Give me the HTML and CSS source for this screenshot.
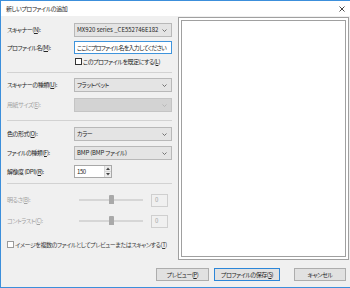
FILE: index.html
```html
<!DOCTYPE html>
<html lang="ja">
<head>
<meta charset="utf-8">
<link rel="stylesheet" href="styles.css">
</head>
<body>
<div class="win">
  <div class="titlebar">
    <span class="title">新しいプロファイルの追加</span>
    <svg class="close" width="6" height="6" viewBox="0 0 6 6"><path d="M0.5 0.5 L5.5 5.5 M5.5 0.5 L0.5 5.5" stroke="#333" stroke-width="0.9" fill="none"/></svg>
  </div>
  <div class="main">
    <div class="form">
      <div class="row">
        <span class="label">スキャナー(<u>N</u>):</span>
        <div class="combo"><span class="val latin">MX920 series _CE552746E182</span><svg class="chev" width="5" height="3" viewBox="0 0 5 3"><path d="M0.5 0.5 L2.5 2.5 L4.5 0.5" stroke="#555" stroke-width="0.8" fill="none"/></svg></div>
      </div>
      <div class="row mt4 h13">
        <span class="label">プロファイル名(<u>M</u>):</span>
        <div class="input">ここにプロファイル名を入力してください</div>
      </div>
      <div class="row mt3 h9">
        <span class="label"></span>
        <span class="check check-indent"></span>
        <span class="checktext">このプロファイルを既定にする(<u>L</u>)</span>
      </div>
      <div class="sep mt6"></div>
      <div class="row mt5">
        <span class="label">スキャナーの種類(<u>U</u>):</span>
        <div class="combo"><span class="val">フラットベット</span><svg class="chev" width="5" height="3" viewBox="0 0 5 3"><path d="M0.5 0.5 L2.5 2.5 L4.5 0.5" stroke="#555" stroke-width="0.8" fill="none"/></svg></div>
      </div>
      <div class="row mt6">
        <span class="label disabled">用紙サイズ(<u>E</u>):</span>
        <div class="combo combo-disabled"><span class="val"></span><svg class="chev" width="5" height="3" viewBox="0 0 5 3"><path d="M0.5 0.5 L2.5 2.5 L4.5 0.5" stroke="#b0b0b0" stroke-width="0.8" fill="none"/></svg></div>
      </div>
      <div class="sep mt8"></div>
      <div class="row mt6">
        <span class="label">色の形式(<u>O</u>):</span>
        <div class="combo"><span class="val">カラー</span><svg class="chev" width="5" height="3" viewBox="0 0 5 3"><path d="M0.5 0.5 L2.5 2.5 L4.5 0.5" stroke="#555" stroke-width="0.8" fill="none"/></svg></div>
      </div>
      <div class="row mt5">
        <span class="label">ファイルの種類(<u>F</u>):</span>
        <div class="combo"><span class="val mixed">BMP (BMP ファイル)</span><svg class="chev" width="5" height="3" viewBox="0 0 5 3"><path d="M0.5 0.5 L2.5 2.5 L4.5 0.5" stroke="#555" stroke-width="0.8" fill="none"/></svg></div>
      </div>
      <div class="row mt5 h13">
        <span class="label">解像度 (DPI)(<u>R</u>):</span>
        <div class="spin">
          <span class="spin-val">150</span>
          <span class="spin-btns">
            <span class="spin-btn"><svg width="4" height="3" viewBox="0 0 4 3"><path d="M0 3 L2 0.5 L4 3 Z" fill="#444"/></svg></span>
            <span class="spin-btn"><svg width="4" height="3" viewBox="0 0 4 3"><path d="M0 0 L2 2.5 L4 0 Z" fill="#444"/></svg></span>
          </span>
        </div>
      </div>
      <div class="sep mt5"></div>
      <div class="row mt9">
        <span class="label disabled">明るさ(<u>B</u>):</span>
        <div class="slider"><div class="track"></div><div class="thumb"></div></div>
        <div class="valbox">0</div>
      </div>
      <div class="row mt7">
        <span class="label disabled">コントラスト(<u>C</u>):</span>
        <div class="slider"><div class="track"></div><div class="thumb"></div></div>
        <div class="valbox">0</div>
      </div>
      <div class="row mt12 h9">
        <span class="check check-light"></span>
        <span class="checktext checktext-wide">イメージを複数のファイルとしてプレビューまたはスキャンする(<u>T</u>)</span>
      </div>
    </div>
    <div class="preview"><div class="preview-inner"></div></div>
  </div>
  <div class="buttons">
    <div class="btn btn-preview">プレビュー(<u>P</u>)</div>
    <div class="btn btn-save">プロファイルの保存(<u>S</u>)</div>
    <div class="btn btn-cancel">キャンセル</div>
  </div>
</div>
</body>
</html>
```

FILE: styles.css
```css
* { box-sizing: border-box; }
html, body { margin: 0; padding: 0; }
body {
  width: 350px;
  height: 288px;
  overflow: hidden;
  background: #f0f0f0;
  font-family: "Noto Sans CJK JP", "Noto Sans", sans-serif;
  font-size: 6px;
  letter-spacing: -0.45px;
  font-feature-settings: "palt";
  color: #262626;
  line-height: 1;
}
u { text-decoration: underline; text-underline-offset: 1px; text-decoration-thickness: 0.5px; }
.latin { font-size: 6px; letter-spacing: 0; }
.mixed { letter-spacing: -0.2px; }
.win {
  width: 350px;
  height: 288px;
  border: 1px solid #3c8fdb;
  border-right: none;
  background: #f0f0f0;
  display: flex;
  flex-direction: column;
}
.titlebar {
  height: 15px;
  flex: none;
  background: #fff;
  display: flex;
  align-items: center;
  justify-content: space-between;
  padding: 0 5px 0 5px;
}
.close { display: block; margin-top: 1px; }
.main { display: flex; align-items: flex-start; height: 244px; flex: none; }
.form { width: 166px; margin-left: 6px; padding-top: 7px; }
.row { display: flex; align-items: center; height: 14px; }
.h13 { height: 13px; }
.h9 { height: 9px; }
.mt3 { margin-top: 3px; }
.mt4 { margin-top: 4px; }
.mt5 { margin-top: 5px; }
.mt6 { margin-top: 6px; }
.mt7 { margin-top: 7px; }
.mt8 { margin-top: 8px; }
.mt9 { margin-top: 9px; }
.mt12 { margin-top: 12px; }
.label { width: 67px; flex: none; white-space: nowrap; }
.disabled { color: #a3a3a3; }
.combo {
  width: 98px;
  height: 100%;
  background: #e4e4e4;
  border: 1px solid #b8b8b8;
  display: flex;
  align-items: center;
  justify-content: space-between;
  padding: 0 4px 0 2px;
  white-space: nowrap;
}
.combo-disabled { background: #d3d3d3; border-color: #c4c4c4; }
.chev { display: block; flex: none; }
.input {
  width: 98px;
  height: 100%;
  background: #fff;
  border: 1px solid #3f94dc;
  display: flex;
  align-items: center;
  padding-left: 2px;
  white-space: nowrap;
  overflow: hidden;
  letter-spacing: -0.75px;
}
.check {
  width: 7px;
  height: 7px;
  flex: none;
  background: #fff;
  border: 1px solid #333;
}
.check-indent { margin-left: 1px; }
.check-light { border-color: #9a9a9a; }
.checktext { margin-left: 1px; white-space: nowrap; }
.checktext-wide { color: #3a3a3a; }
.sep { height: 1px; background: #d2d2d2; width: 165px; }
.spin {
  width: 38px;
  height: 100%;
  display: flex;
  background: #fff;
  border: 1px solid #a8a8a8;
}
.spin-val { flex: 1; display: flex; align-items: center; padding-left: 2px; }
.spin-btns { width: 7px; display: flex; flex-direction: column; border-left: 1px solid #d6d6d6; }
.spin-btn { flex: 1; display: flex; align-items: center; justify-content: center; background: #ececec; }
.spin-btn + .spin-btn { border-top: 1px solid #d6d6d6; }
.spin-btn svg { display: block; }
.slider { width: 64px; height: 100%; margin-left: 5px; position: relative; display: flex; align-items: center; }
.track { width: 100%; height: 2px; background: #d6d6d6; }
.thumb { position: absolute; left: 30px; top: 2px; width: 5px; height: 9px; background: #a9a9a9; border-radius: 1px 1px 0 0; }
.valbox {
  width: 17px;
  height: 13px;
  margin-left: 8px;
  border: 1px solid #cfcfcf;
  background: #f0f0f0;
  color: #a3a3a3;
  display: flex;
  align-items: center;
  padding-left: 3px;
}
.preview {
  width: 171px;
  height: 243px;
  margin-left: 5px;
  margin-top: 1px;
  border: 1px solid #a0a0a0;
  background: #fff;
  padding: 2px;
}
.preview-inner { width: 100%; height: 100%; border: 1px solid #a0a0a0; background: #fff; }
.buttons {
  display: flex;
  justify-content: flex-end;
  margin-top: 8px;
  padding-right: 4px;
}
.btn {
  height: 13px;
  background: #e1e1e1;
  border: 1px solid #adadad;
  display: flex;
  align-items: center;
  justify-content: center;
  white-space: nowrap;
}
.btn-preview { width: 53px; margin-right: 5px; }
.btn-save { width: 66px; margin-right: 14px; border-color: #2c86d8; }
.btn-cancel { width: 52px; }
```
